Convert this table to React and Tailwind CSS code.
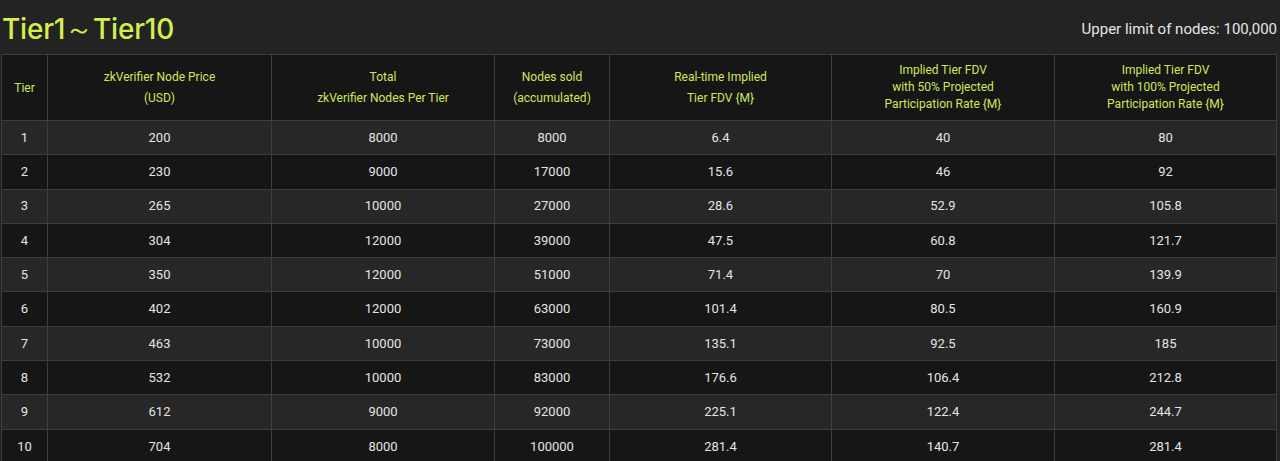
import React from "react";

const rows = [
  [1, 200, 8000, 8000, "6.4", "40", "80"],
  [2, 230, 9000, 17000, "15.6", "46", "92"],
  [3, 265, 10000, 27000, "28.6", "52.9", "105.8"],
  [4, 304, 12000, 39000, "47.5", "60.8", "121.7"],
  [5, 350, 12000, 51000, "71.4", "70", "139.9"],
  [6, 402, 12000, 63000, "101.4", "80.5", "160.9"],
  [7, 463, 10000, 73000, "135.1", "92.5", "185"],
  [8, 532, 10000, 83000, "176.6", "106.4", "212.8"],
  [9, 612, 9000, 92000, "225.1", "122.4", "244.7"],
  [10, 704, 8000, 100000, "281.4", "140.7", "281.4"],
];

const widths = ["w-[46px]", "w-[224px]", "w-[223px]", "w-[115px]", "w-[222px]", "w-[223px]", "w-[222px]"];

export default function App() {
  return (
    <div className="min-h-screen bg-[#232323] font-['Roboto','Liberation_Sans',sans-serif] overflow-hidden">
      {/* Header */}
      <div className="flex items-end justify-between h-[54px] pl-[2px] pr-[3px] pb-[11px]">
        <h1 className="font-['Inter',sans-serif] text-[28px] leading-none font-medium text-[#d4ef4b] tracking-[-0.2px]">
          Tier1～Tier10
        </h1>
        <p className="text-[15px] text-[#e6e6e6] mb-[3px]">Upper limit of nodes: 100,000</p>
      </div>

      {/* Table */}
      <table className="ml-px w-[1276px] table-fixed border-collapse text-center">
        <colgroup>
          {widths.map((w, i) => (
            <col key={i} className={w} />
          ))}
        </colgroup>
        <thead>
          <tr className="h-[66px] bg-[#161616] text-[12px] text-[#cfe85a]">
            <th className="border border-[#3d3d3d] font-normal">Tier</th>
            <th className="border border-[#3d3d3d] font-normal leading-[21px] pt-px">
              zkVerifier Node Price
              <br />
              (USD)
            </th>
            <th className="border border-[#3d3d3d] font-normal leading-[21px] pt-px">
              Total
              <br />
              zkVerifier Nodes Per Tier
            </th>
            <th className="border border-[#3d3d3d] font-normal leading-[21px] pt-px">
              Nodes sold
              <br />
              (accumulated)
            </th>
            <th className="border border-[#3d3d3d] font-normal leading-[21px] pt-px">
              Real-time Implied
              <br />
              Tier FDV {"{M}"}
            </th>
            <th className="border border-[#3d3d3d] font-normal leading-[17px]">
              Implied Tier FDV
              <br />
              with 50% Projected
              <br />
              Participation Rate {"{M}"}
            </th>
            <th className="border border-[#3d3d3d] font-normal leading-[17px]">
              Implied Tier FDV
              <br />
              with 100% Projected
              <br />
              Participation Rate {"{M}"}
            </th>
          </tr>
        </thead>
        <tbody>
          {rows.map((r, i) => (
            <tr
              key={r[0]}
              className={`h-[34.3px] text-[13px] text-[#e4e4e4] ${i % 2 === 0 ? "bg-[#272727]" : "bg-[#161616]"}`}
            >
              {r.map((c, j) => (
                <td key={j} className="border border-[#3d3d3d] p-0">
                  {c}
                </td>
              ))}
            </tr>
          ))}
        </tbody>
      </table>
    </div>
  );
}
